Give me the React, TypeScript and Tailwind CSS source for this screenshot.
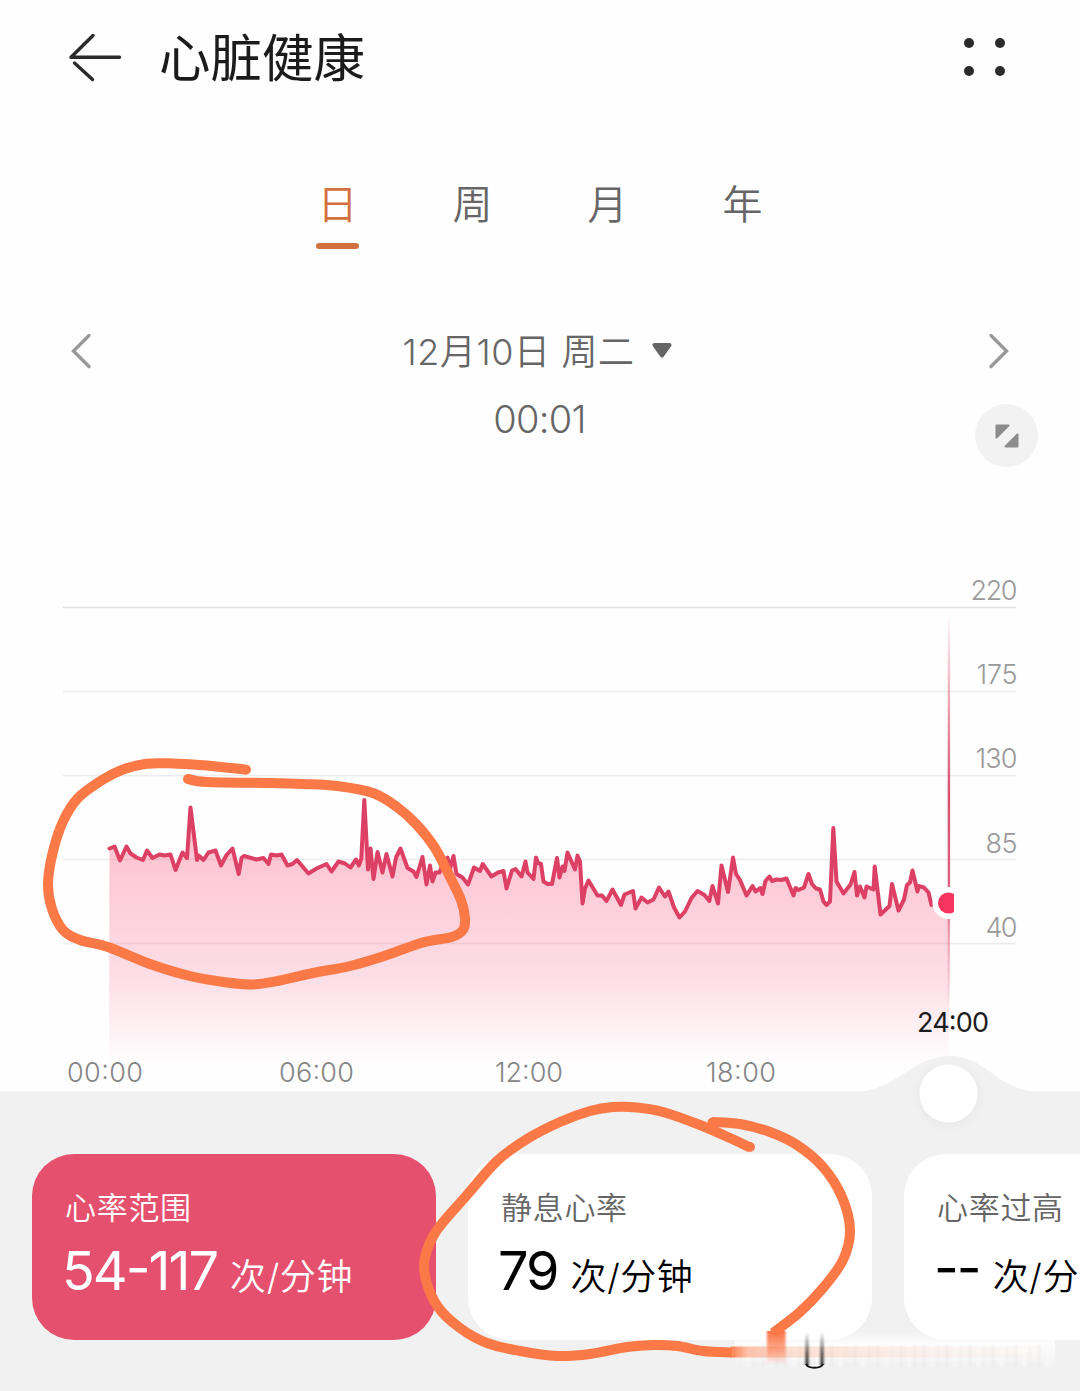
import React from 'react'

type Point = [number, number]

const tabs = ['日', '周', '月', '年']

const gridLines = [
  { label: '220', y: 607.5, baseline: 600, width: 47 },
  { label: '175', y: 691.5, baseline: 684, width: 41 },
  { label: '130', y: 775.5, baseline: 768, width: 42 },
  { label: '85', y: 859.5, baseline: 853, width: 32 },
  { label: '40', y: 943.5, baseline: 937, width: 32 },
]

const timeLabels = [
  { label: '00:00', x: 67, width: 76 },
  { label: '06:00', x: 279, width: 75 },
  { label: '12:00', x: 495, width: 68 },
  { label: '18:00', x: 706, width: 70 },
]

// heart rate samples in chart coordinates
const heartRate =
  '109.5,848.5 114.5,846.5 120,860.5 126.5,846.5 130.5,853.5 136.5,857.5 143,860 147,850.5 152.5,858 159.5,854.5 164.5,855.5 170.5,854.5 175.5,870 182.5,852.5 187,858 190.5,807.5 197,860 198.7,855.5 203.5,860 208.5,852.5 215.5,850.5 221,865.5 226.5,855 232.5,848.5 238.7,874 241.5,858 244,856 256.5,859.5 263.5,858 268.5,864 271,854.5 276.5,855.5 281.5,854.5 287.5,865.5 292.5,864 297,860 308.5,873.5 316.5,868.5 326.5,864 331.5,871.5 338.5,861.5 345,863.5 350.5,867.5 356,859.5 359,865.5 361.3,858.5 364.3,800 368,869.5 370.5,848.5 373.5,879 377.5,852 382.5,872.5 386.5,854 392.5,876.5 396,857.5 400.5,848.5 407.5,868 413.5,871.5 416.5,877 422.5,857 426.5,884.5 430,865.5 432.5,881.5 435.5,872.5 439.5,872.5 443.5,862 447.5,857.5 450,868.5 453.5,856 456.5,874 462.5,877.5 468,884.5 474,867.5 480,871 482.7,864 491.5,876.5 498,872.5 503.5,871 506.5,888.5 512,870.5 515.5,869 521.5,876.5 525.5,861.5 527.5,872.5 533.5,879 536,857.5 538,863 541,864 543.5,881.5 547.5,884 552,884 557,858 559.5,877.5 562.5,866.5 564.5,871 567.5,852.5 575,869.5 577.5,855.5 580,861.5 582.5,903.5 585,888.5 588.5,880.5 597.5,895.5 602,895.5 606.5,901 612.5,889.5 621,905 624.5,894.5 633,891 635.5,908.5 641.5,897.5 647.5,902.5 653.5,899.5 659,887.5 665,896.5 668.5,891.5 674,907.5 679.5,917.5 685,911.5 691.5,898 697.5,891 704.5,895 709.3,901 712.5,886 718,903.5 721.5,865.5 728,892 733,857.5 736,874 740,880 746.5,895.5 752.5,886 755.5,891.5 760.5,888 762.5,894 765.5,881 769.5,876.5 772,881 776.5,879.5 781.5,880 786.5,878.5 793.5,895.5 795.5,888 798.5,890 804,887.5 808.5,874 812,884 816,888.5 820,889.5 823.5,901.5 826.5,905 830,901.5 833.3,828 836.5,881.5 843.5,893.5 850.5,884.5 854.5,872 857,895.5 860,886.5 864.5,897.5 866.5,886.5 873.5,889.5 874.7,866.5 880.5,914.5 889.5,906 892,884 898.5,910.5 904,899.5 907,885 910,882.5 912.5,870.5 917.5,891.5 918.5,886 924,887.5 928.5,892.5 931.5,905'

// hand-drawn pen strokes
const strokes: Point[][] = [
  [
    [246, 769.7], [206.7, 765.5], [173, 763.5], [146.5, 763.7], [123, 769.5], [103, 779.5], [78, 798], [63, 821.5],
    [53, 851.5], [48, 883], [51.7, 908], [63, 930], [80, 940], [108, 947], [150, 964], [190, 976], [227, 982.5],
    [253, 984.5], [280, 980.5], [313, 973], [350, 966], [387, 955], [423, 942.5], [451.7, 937], [463, 930],
    [465, 918], [461, 900], [450, 877], [435, 848], [417, 825], [397, 807], [373, 793], [337, 786], [303, 784],
    [270, 783], [207, 782], [188, 779],
  ],
  [
    [750, 1147.5], [730, 1138], [700, 1125], [663, 1112], [637, 1107.5], [613, 1107], [590, 1111], [560, 1122],
    [527, 1139], [497, 1161], [467, 1195], [437, 1230], [425, 1257], [426, 1280], [438, 1307], [460, 1328],
    [487, 1343], [520, 1351], [557, 1356], [590, 1354], [627, 1347], [653, 1345], [677, 1346], [703, 1351],
    [732, 1352.5],
  ],
  [
    [712, 1122], [740, 1124], [770, 1132], [797, 1145], [823, 1167], [842, 1197], [850, 1230], [843, 1260],
    [823, 1288], [800, 1312], [773, 1333],
  ],
]

const smoothPath = (points: Point[]) => {
  let d = `M${points[0][0]},${points[0][1]}`
  for (let i = 0; i < points.length - 1; i++) {
    const p0 = points[i - 1] ?? points[i]
    const p1 = points[i]
    const p2 = points[i + 1]
    const p3 = points[i + 2] ?? p2
    d += `C${p1[0] + (p2[0] - p0[0]) / 6},${p1[1] + (p2[1] - p0[1]) / 6} ${p2[0] - (p3[0] - p1[0]) / 6},${p2[1] - (p3[1] - p1[1]) / 6} ${p2[0]},${p2[1]}`
  }
  return d
}

const Header = () => (
  <header className="flex h-[114px] items-center pl-[68px] pr-[75px]">
    <svg className="h-[52px] w-[55px]" viewBox="68 31 55 52" fill="none" stroke="#2b2b2b" strokeWidth="3.4" strokeLinecap="round" strokeLinejoin="round">
      <path d="M93 35.5 71 57.3H119.5" />
      <path d="M74.5 63 92.5 79.5" />
    </svg>
    <h1 className="ml-[36px] pt-[4px] text-[51.5px] leading-none text-[#1b1b1b]">心脏健康</h1>
    <div className="ml-auto grid grid-cols-2 gap-x-[21px] gap-y-[18px]">
      {[0, 1, 2, 3].map((dot) => (
        <span key={dot} className="size-[10px] rounded-full bg-[#2b2b2b]" />
      ))}
    </div>
  </header>
)

const PeriodTabs = () => (
  <nav className="flex h-[186px] justify-center pt-[65px]">
    {tabs.map((tab, index) => (
      <div key={tab} className="flex w-[135px] flex-col items-center">
        <span className={`h-[64px] text-[40px] font-[350] leading-[51px] ${index === 0 ? 'text-[#d2713f]' : 'text-[#666]'}`}>{tab}</span>
        {index === 0 && <span className="h-[6px] w-[43px] rounded-full bg-[#d2713f]" />}
      </div>
    ))}
  </nav>
)

const DatePicker = () => (
  <section className="h-[180px]">
    <div className="flex h-[102px] items-center justify-between px-[70px]">
      <svg className="h-[36px] w-[22px]" viewBox="0 0 22 36" fill="none" stroke="#999" strokeWidth="3.4" strokeLinecap="round">
        <path d="M19 2.5 3.5 18 19 33.5" />
      </svg>
      <div className="mr-[5px] flex items-center gap-[16px] text-[36px] font-[350] leading-none text-[#666]">
        <span className="pt-[1px] tracking-[0.6px]">12月10日 周二</span>
        <svg className="h-[17px] w-[22px]" viewBox="0 0 22 17">
          <path d="M3.5 2H18.5L11 12.5Z" fill="#666" stroke="#666" strokeWidth="4" strokeLinejoin="round" />
        </svg>
      </div>
      <svg className="h-[36px] w-[22px]" viewBox="0 0 22 36" fill="none" stroke="#999" strokeWidth="3.4" strokeLinecap="round">
        <path d="M3 2.5 18.5 18 3 33.5" />
      </svg>
    </div>
    <div className="grid grid-cols-3 pr-[42px]">
      <span className="col-start-2 ml-[41px] text-center text-[38px] font-[350] leading-[35px] tracking-[-0.7px] text-[#666]">00:01</span>
      <button className="mt-[2px] flex size-[63px] items-center justify-center justify-self-end rounded-full bg-[#f2f2f2]">
        <svg className="size-[24px]" viewBox="0 0 24 24" fill="#8c8c8c" stroke="#8c8c8c" strokeWidth="2" strokeLinejoin="round">
          <path d="M1.5 1.5H13.5L1.5 13.5Z" />
          <path d="M22.5 10.5V22.5H10.5Z" />
        </svg>
      </button>
    </div>
  </section>
)

const HeartRateChart = () => (
  <svg className="relative z-10 block h-[611px] w-full overflow-visible" viewBox="0 480 1080 611">
    <defs>
      <linearGradient id="area" gradientUnits="userSpaceOnUse" x1="0" y1="800" x2="0" y2="1066">
        <stop offset="0" stopColor="#ff3c69" stopOpacity="0.36" />
        <stop offset="0.3" stopColor="#fb4673" stopOpacity="0.28" />
        <stop offset="0.65" stopColor="#fb4673" stopOpacity="0.18" />
        <stop offset="1" stopColor="#fb4673" stopOpacity="0" />
      </linearGradient>
      <linearGradient id="cursor" gradientUnits="userSpaceOnUse" x1="0" y1="612" x2="0" y2="1010">
        <stop offset="0" stopColor="#d63a60" stopOpacity="0" />
        <stop offset="0.45" stopColor="#d63a60" stopOpacity="0.9" />
        <stop offset="0.7" stopColor="#d63a60" stopOpacity="0.8" />
        <stop offset="0.8" stopColor="#d63a60" stopOpacity="0.45" />
        <stop offset="1" stopColor="#d63a60" stopOpacity="0" />
      </linearGradient>
      <clipPath id="plot">
        <rect x="63" y="600" width="891" height="480" />
      </clipPath>
      <filter id="knobShadow" x="-50%" y="-50%" width="200%" height="200%">
        <feDropShadow dx="0" dy="2" stdDeviation="5" floodColor="#000" floodOpacity="0.05" />
      </filter>
    </defs>

    {gridLines.map(({ label, y, baseline, width }, index) => (
      <g key={label}>
        <path d={`M63 ${y}H1016`} stroke={index === 0 ? '#e2e2e2' : '#ececec'} strokeWidth="1.5" />
        <text x={1017.5 - width} y={baseline} textLength={width} fontSize="27" fontWeight="350" fill="#999">
          {label}
        </text>
      </g>
    ))}

    <polygon points={`109,1066 ${heartRate} 949,905 949,1066`} fill="url(#area)" />
    <polyline points={heartRate} fill="none" stroke="#dc4165" strokeWidth="4" strokeLinecap="round" strokeLinejoin="round" />

    {/* current position */}
    <rect x="947.7" y="612" width="2.4" height="398" fill="url(#cursor)" />
    <g clipPath="url(#plot)">
      <circle cx="948.5" cy="903" r="16" fill="#fff" />
      <circle cx="948.5" cy="903" r="10.5" fill="#f8355f" />
    </g>

    {timeLabels.map(({ label, x, width }) => (
      <text key={label} x={x} y="1082" textLength={width} fontSize="27" fontWeight="350" fill="#858585">
        {label}
      </text>
    ))}
    <text x="917" y="1032" textLength="72" fontSize="27" fontWeight="400" fill="#1c1c1c">
      24:00
    </text>

    {/* slider handle */}
    <path d="M856 1092C897 1090 913 1056 950 1056S995 1090 1040 1092Z" fill="#f1f1f1" />
    <circle cx="948.5" cy="1093.5" r="29" fill="#fff" filter="url(#knobShadow)" />
  </svg>
)

interface MetricCardProps {
  title: string
  value: string
  active?: boolean
}

const MetricCard: React.FC<MetricCardProps> = ({ title, value, active = false }) => (
  <article
    className={`h-[186px] w-[404px] shrink-0 rounded-[42px] px-[33px] pt-[36px] ${active ? 'bg-[#e6506f] text-white' : 'bg-white text-black'}`}
  >
    <h2 className={`text-[31px] font-[350] leading-[36px] tracking-[0.7px] ${active ? 'text-white' : 'text-[#666]'}`}>{title}</h2>
    <p className="mt-[12px] flex items-baseline whitespace-nowrap leading-[66px]">
      <span className="-ml-[3px] text-[54px] tracking-[-2px] [font-feature-settings:'case']">{value}</span>
      <span className="ml-[13px] text-[36px] font-[350] tracking-[0.6px]">次/分钟</span>
    </p>
  </article>
)

// pen marks drawn over the page, with a smudged lower end
const PenMarks = () => (
  <svg className="pointer-events-none absolute inset-0 z-20 h-[1391px] w-[1080px]" viewBox="0 0 1080 1391">
    <defs>
      <linearGradient id="haze" x1="0" y1="0" x2="0" y2="1">
        <stop offset="0" stopColor="#fff" stopOpacity="0" />
        <stop offset="0.35" stopColor="#fff" stopOpacity="0.85" />
        <stop offset="0.7" stopColor="#fafafa" stopOpacity="0.7" />
        <stop offset="1" stopColor="#f1f1f1" stopOpacity="0" />
      </linearGradient>
      <linearGradient id="smearX" x1="0" y1="0" x2="1" y2="0">
        <stop offset="0" stopColor="#ff7a45" stopOpacity="0.95" />
        <stop offset="0.05" stopColor="#ff7a45" stopOpacity="0.45" />
        <stop offset="0.18" stopColor="#ff7a45" stopOpacity="0.22" />
        <stop offset="0.5" stopColor="#ff7a45" stopOpacity="0.1" />
        <stop offset="1" stopColor="#ff7a45" stopOpacity="0" />
      </linearGradient>
      <linearGradient id="smearY" x1="0" y1="0" x2="0" y2="1">
        <stop offset="0" stopColor="#fb7040" />
        <stop offset="0.5" stopColor="#fb7040" stopOpacity="0.6" />
        <stop offset="1" stopColor="#fb7040" stopOpacity="0" />
      </linearGradient>
      <linearGradient id="ink" gradientUnits="userSpaceOnUse" x1="0" y1="1332" x2="0" y2="1368">
        <stop offset="0" stopColor="#111" stopOpacity="0" />
        <stop offset="0.6" stopColor="#111" stopOpacity="0.75" />
        <stop offset="1" stopColor="#111" />
      </linearGradient>
      <pattern id="streaks" width="23" height="36" patternUnits="userSpaceOnUse">
        <rect x="3" width="2" height="36" fill="#ddd" fillOpacity="0.35" />
        <rect x="11" width="2" height="36" fill="#fff" fillOpacity="0.6" />
        <rect x="17" width="2" height="36" fill="#ddd" fillOpacity="0.2" />
      </pattern>
      <filter id="soft" filterUnits="userSpaceOnUse" x="720" y="1320" width="350" height="60">
        <feGaussianBlur stdDeviation="1 0.7" />
      </filter>
    </defs>
    <rect x="735" y="1331" width="320" height="38" fill="url(#haze)" />
    <rect x="740" y="1345" width="310" height="22" fill="url(#streaks)" filter="url(#soft)" />
    <rect x="731" y="1346.5" width="324" height="11" fill="url(#smearX)" filter="url(#soft)" />
    <rect x="767" y="1331" width="18.5" height="34" fill="url(#smearY)" filter="url(#soft)" />
    <path d="M807 1333V1365M822 1333V1365" fill="none" stroke="url(#ink)" strokeWidth="3" filter="url(#soft)" />
    <path d="M806 1364C808 1369 821 1369 823 1364" fill="none" stroke="#111" strokeWidth="2" />
    <g fill="none" stroke="#fb7947" strokeWidth="10" strokeLinejoin="round">
      <path d={smoothPath(strokes[0])} strokeLinecap="round" />
      <path d={smoothPath(strokes[1])} />
      <path d={smoothPath(strokes[2])} />
    </g>
    <circle cx="750" cy="1147" r="5" fill="#fb7947" />
    <circle cx="712.5" cy="1122.5" r="5" fill="#fb7947" />
  </svg>
)

export default function App() {
  return (
    <main className="relative flex h-[1391px] w-[1080px] flex-col overflow-hidden bg-[#fefefe] font-[Inter,'Noto_Sans_CJK_SC',sans-serif]">
      <Header />
      <PeriodTabs />
      <DatePicker />
      <HeartRateChart />
      <section className="flex flex-1 items-start gap-[32px] overflow-hidden bg-[#f1f1f1] pl-[32px] pt-[63px]">
        <MetricCard title="心率范围" value="54-117" active />
        <MetricCard title="静息心率" value="79" />
        <MetricCard title="心率过高" value="--" />
      </section>
      <PenMarks />
    </main>
  )
}
